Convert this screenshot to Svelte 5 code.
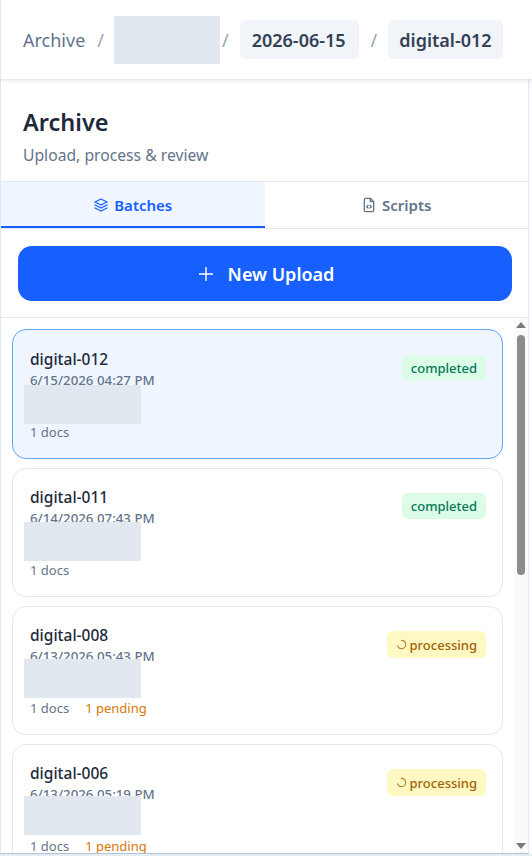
<script lang="ts">
  const crumbs = ['2026-06-15', 'digital-012'];

  const batches = [
    { name: 'digital-012', date: '6/15/2026 04:27 PM', status: 'completed', docs: 1, pending: 0, active: true, maskTop: 55 },
    { name: 'digital-011', date: '6/14/2026 07:43 PM', status: 'completed', docs: 1, pending: 0, maskTop: 53 },
    { name: 'digital-008', date: '6/13/2026 05:43 PM', status: 'processing', docs: 1, pending: 1, maskTop: 52 },
    { name: 'digital-006', date: '6/13/2026 05:19 PM', status: 'processing', docs: 1, pending: 1, maskTop: 51 },
  ];
</script>

<div class="page">
  <header class="crumbs">
    <span class="root">Archive</span>
    <span class="sep first">/</span>
    <span class="redact-crumb"></span>
    {#each crumbs as crumb, i}
      <span class="sep" class:tight={i === 0}>/</span>
      <span class="chip">{crumb}</span>
    {/each}
  </header>

  <aside class="panel">
    <div class="head">
      <h1>Archive</h1>
      <p>Upload, process &amp; review</p>
    </div>

    <div class="tabs">
      <button class="tab active">
        <svg viewBox="0 0 24 24" width="16" height="16" fill="none" stroke="currentColor" stroke-width="2" stroke-linecap="round" stroke-linejoin="round">
          <path d="M12 3 3 7.5 12 12l9-4.5L12 3z" />
          <path d="m3 12 9 4.5 9-4.5" />
          <path d="m3 16.5 9 4.5 9-4.5" />
        </svg>
        Batches
      </button>
      <button class="tab">
        <svg viewBox="0 0 24 24" width="16" height="16" fill="none" stroke="currentColor" stroke-width="2" stroke-linecap="round" stroke-linejoin="round">
          <path d="M14 2H7a2 2 0 0 0-2 2v16a2 2 0 0 0 2 2h10a2 2 0 0 0 2-2V7l-5-5z" />
          <path d="M14 2v5h5" />
          <path d="m10.5 12.5-2 2 2 2" />
          <path d="m13.5 12.5 2 2-2 2" />
        </svg>
        Scripts
      </button>
    </div>

    <div class="action">
      <button class="upload">
        <svg viewBox="0 0 16 16" width="16" height="16" fill="none" stroke="currentColor" stroke-width="1.4">
          <path d="M8 1v14M1 8h14" />
        </svg>
        New Upload
      </button>
    </div>

    <div class="list-wrap">
      <div class="list">
        {#each batches as batch}
          <div class="card" class:active={batch.active}>
            <div class="top">
              <div class="info">
                <div class="name">{batch.name}</div>
                <div class="date">{batch.date}</div>
              </div>
              <span class="badge {batch.status}">
                {#if batch.status === 'processing'}
                  <svg class="spin" viewBox="0 0 12 12" width="11" height="11" fill="none" stroke="currentColor" stroke-width="1.2" stroke-linecap="round">
                    <path d="M6 1.5A4.5 4.5 0 1 1 1.7 7.3" />
                  </svg>
                {/if}
                {batch.status}
              </span>
            </div>
            <div class="meta">
              <span>{batch.docs} docs</span>
              {#if batch.pending}
                <span class="pending">{batch.pending} pending</span>
              {/if}
            </div>
            <span class="redact" style="top: {batch.maskTop}px"></span>
          </div>
        {/each}
      </div>

      <div class="scrollbar">
        <span class="arrow up"></span>
        <span class="thumb"></span>
        <span class="arrow down"></span>
      </div>
    </div>
  </aside>
</div>

<style>
  :global(body) {
    margin: 0;
    background: #fbfbfd;
    font-family: "Noto Sans", "Open Sans", sans-serif;
  }

  .page {
    height: 856px;
    display: flex;
    flex-direction: column;
    overflow: hidden;
    box-sizing: border-box;
    border-bottom: 2px solid #e4edf5;
  }

  .crumbs {
    position: relative;
    z-index: 1;
    height: 79px;
    flex-shrink: 0;
    box-sizing: border-box;
    display: flex;
    align-items: center;
    padding-left: 22px;
    background: #fff;
    border-left: 1px solid #e2e8f0;
    box-shadow: 0 1px 4px rgba(15, 23, 42, 0.14);
    font-size: 18px;
  }

  .root {
    color: #64748b;
  }

  .sep {
    color: #94a3b8;
    margin: 0 11px 0 12px;
  }

  .sep.first {
    margin: 0 10px 0 12px;
  }

  .sep.tight {
    margin: 0 11px 0 2px;
  }

  .redact-crumb {
    width: 106px;
    height: 48px;
    background: #e2e8f0;
  }

  .chip {
    height: 39px;
    padding: 0 13px 0 12px;
    display: flex;
    align-items: center;
    border-radius: 6px;
    background: #f1f5f9;
    color: #334155;
    font-weight: 600;
  }

  .chip:last-child {
    padding: 0 11px;
  }

  .panel {
    flex: 1;
    min-height: 0;
    width: 529px;
    box-sizing: border-box;
    display: flex;
    flex-direction: column;
    background: #fff;
    border-left: 1px solid #e2e8f0;
    border-right: 1px solid #e2e8f0;
    border-bottom: 1px solid #b6c2cf;
  }

  .head {
    height: 102px;
    box-sizing: border-box;
    padding: 26px 22px 0;
  }

  h1 {
    margin: 0;
    font-size: 23.5px;
    line-height: 34px;
    font-weight: 600;
    color: #1e293b;
  }

  .head p {
    margin: 6px 0 0;
    font-size: 15.7px;
    line-height: 20px;
    color: #64748b;
  }

  .tabs {
    display: flex;
    height: 48px;
    flex-shrink: 0;
    box-sizing: border-box;
    border-top: 1px solid #e2e8f0;
    border-bottom: 1px solid #e2e8f0;
  }

  .tab {
    flex: 1;
    display: flex;
    align-items: center;
    justify-content: center;
    gap: 5px;
    padding: 0;
    border: 0;
    background: #fff;
    color: #64748b;
    font: inherit;
    font-size: 15px;
    font-weight: 600;
  }

  .tab.active {
    background: #eff6ff;
    color: #175fff;
    box-shadow: inset 0 -2px 0 #175fff;
  }

  .action {
    flex-shrink: 0;
    height: 89px;
    box-sizing: border-box;
    padding: 17px 16px 0 17px;
    border-bottom: 1px solid #e2e8f0;
  }

  .upload {
    width: 100%;
    height: 55px;
    display: flex;
    align-items: center;
    justify-content: center;
    gap: 14px;
    padding: 0 0 0 2px;
    border: 0;
    border-radius: 14px;
    background: #175fff;
    color: #fff;
    font: inherit;
    font-size: 18px;
    font-weight: 600;
  }

  .list-wrap {
    position: relative;
    flex: 1;
    min-height: 0;
  }

  .list {
    height: 100%;
    box-sizing: border-box;
    overflow: hidden;
    padding: 11px 25px 0 11px;
    display: flex;
    flex-direction: column;
    gap: 9px;
  }

  .card {
    position: relative;
    flex-shrink: 0;
    height: 129px;
    box-sizing: border-box;
    padding: 16px 16px 0 17px;
    border: 1px solid #e2e8f0;
    border-radius: 14px;
    background: #fff;
  }

  .card.active {
    height: 130px;
    padding-top: 17px;
    background: #eff6ff;
    border-color: #60a5fa;
  }

  .top {
    display: flex;
    justify-content: space-between;
    align-items: flex-start;
  }

  .name {
    font-size: 15.5px;
    line-height: 25px;
    font-weight: 500;
    color: #1e293b;
  }

  .date {
    font-size: 13.3px;
    line-height: 17px;
    font-weight: 500;
    color: #64748b;
  }

  .badge {
    margin-top: 8px;
    height: 26px;
    padding: 0 9px;
    display: inline-flex;
    align-items: center;
    gap: 3px;
    border-radius: 6px;
    font-size: 13px;
    font-weight: 500;
  }

  .badge.completed {
    background: #dcfce7;
    color: #047857;
  }

  .badge.processing {
    height: 27px;
    background: #fef9c3;
    color: #a16207;
  }

  .spin {
    opacity: 0.75;
  }

  .meta {
    margin-top: 34px;
    display: flex;
    gap: 16px;
    font-size: 13px;
    line-height: 18px;
    color: #64748b;
  }

  .pending {
    color: #d97706;
  }

  .redact {
    position: absolute;
    left: 11px;
    width: 117px;
    height: 39px;
    background: #e2e8f0;
  }

  .scrollbar {
    position: absolute;
    top: 0;
    right: 0;
    bottom: 0;
    width: 14px;
    box-sizing: border-box;
    padding: 4px 0;
    display: flex;
    flex-direction: column;
    align-items: center;
    background: #fafafa;
  }

  .arrow {
    width: 0;
    height: 0;
    border-left: 5px solid transparent;
    border-right: 5px solid transparent;
  }

  .arrow.up {
    border-bottom: 6px solid #7a7a7a;
  }

  .arrow.down {
    margin-top: auto;
    border-top: 6px solid #7a7a7a;
  }

  .thumb {
    width: 8px;
    height: 240px;
    margin-top: 7px;
    border-radius: 4px;
    background: #8c8c8c;
  }
</style>
